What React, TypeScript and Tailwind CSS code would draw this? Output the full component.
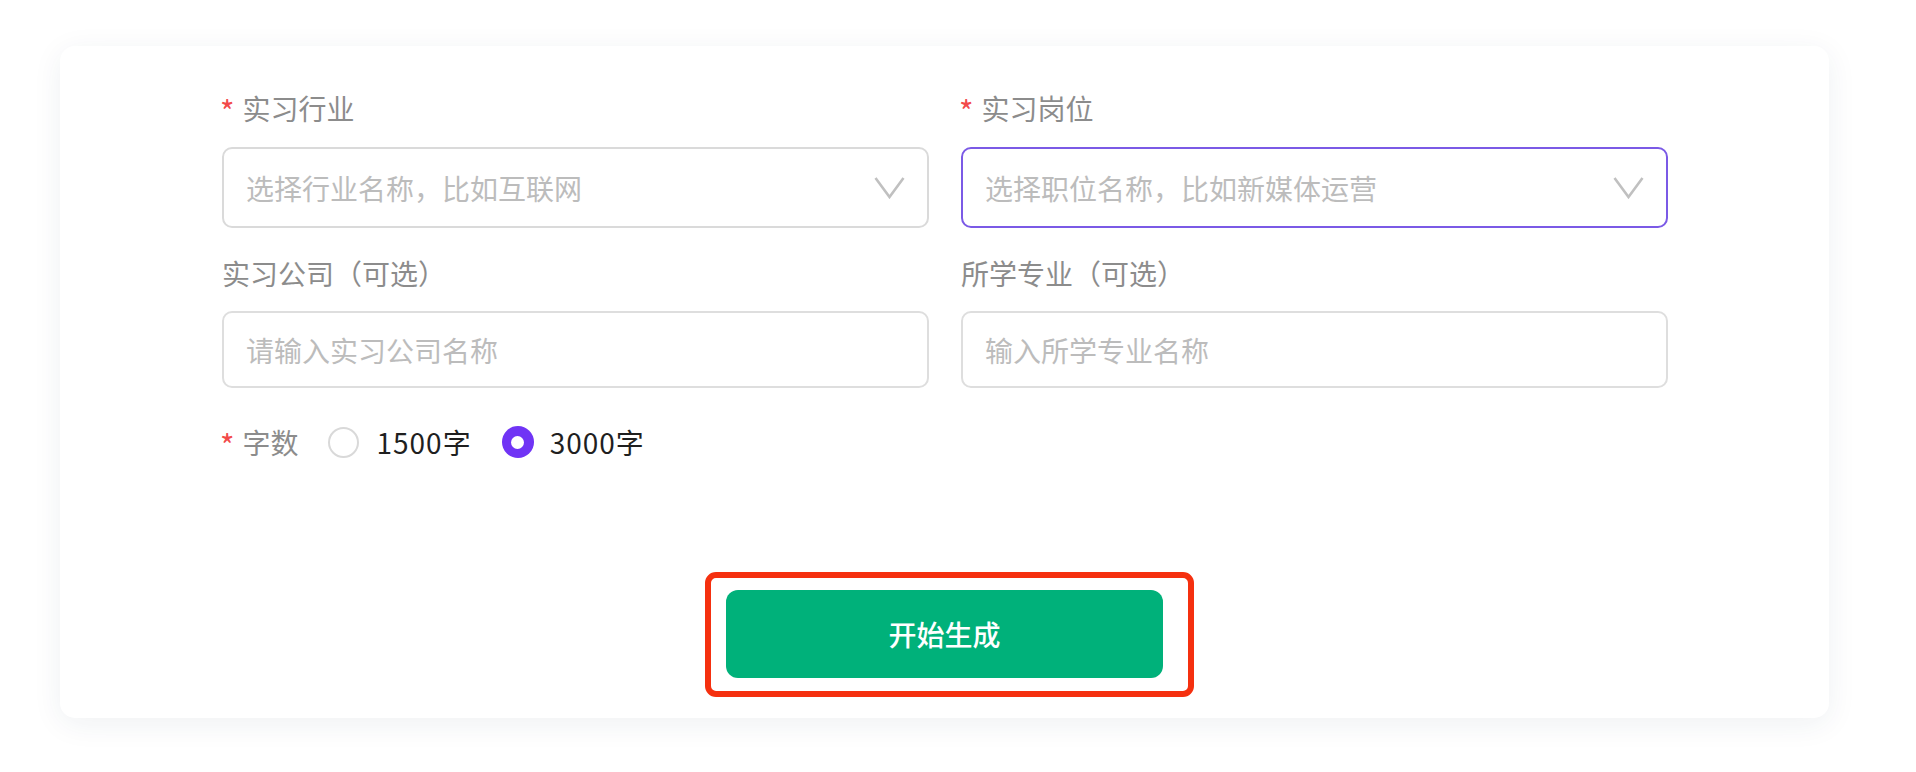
import React from "react";

const font = { fontFamily: '"Noto Sans CJK SC", "Noto Sans", sans-serif' };

function Chevron() {
  return (
    <svg width="31" height="23" viewBox="0 0 31 23" fill="none">
      <polyline points="1.5,2 15.5,21 29.5,2" stroke="#c0c0c0" strokeWidth="2.6" strokeLinejoin="miter" />
    </svg>
  );
}

function Label({ text, required }: { text: string; required?: boolean }) {
  return (
    <div className="flex items-center h-[40px] leading-[40px] text-[28px] text-[#8c8c8c]">
      {required && <span className="text-[#f24a4a] -ml-[2px] mr-[8px] text-[31px] leading-[40px] pt-[6px]">*</span>}
      <span>{text}</span>
    </div>
  );
}

export default function App() {
  return (
    <div className="w-[1916px] h-[772px] bg-white overflow-hidden" style={font}>
      <div className="ml-[60px] mt-[46px] w-[1769px] h-[672px] rounded-[15px] bg-white shadow-[0_6px_30px_rgba(30,50,80,0.07)] pt-[42px] pl-[162px]">
        <div className="w-[1446px] grid grid-cols-2 gap-x-[32px]">
          <div>
            <Label text="实习行业" required />
            <div className="mt-[19px] h-[81px] rounded-[10px] border-2 border-[#dadada] flex items-center justify-between pl-[22px] pr-[22px]">
              <span className="text-[28px] text-[#bcbcbc]">选择行业名称，比如互联网</span>
              <Chevron />
            </div>
          </div>
          <div>
            <Label text="实习岗位" required />
            <div className="mt-[19px] h-[81px] rounded-[10px] border-2 border-[#7b5ae6] flex items-center justify-between pl-[22px] pr-[22px]">
              <span className="text-[28px] text-[#bcbcbc]">选择职位名称，比如新媒体运营</span>
              <Chevron />
            </div>
          </div>
          <div className="mt-[25px]">
            <Label text="实习公司（可选）" />
            <div className="mt-[18px] h-[77px] rounded-[10px] border-2 border-[#dedede] flex items-center pl-[22px]">
              <span className="text-[28px] text-[#bcbcbc]">请输入实习公司名称</span>
            </div>
          </div>
          <div className="mt-[25px]">
            <Label text="所学专业（可选）" />
            <div className="mt-[18px] h-[77px] rounded-[10px] border-2 border-[#dedede] flex items-center pl-[22px]">
              <span className="text-[28px] text-[#bcbcbc]">输入所学专业名称</span>
            </div>
          </div>
        </div>

        <div className="mt-[34px] flex items-center h-[40px]">
          <Label text="字数" required />
          <div className="ml-[29px] w-[31px] h-[31px] rounded-full border-2 border-[#d9d9d9] bg-white" />
          <span className="ml-[18px] text-[28px] text-[#1f1f1f] leading-[40px] tracking-[1px]">1500字</span>
          <div className="ml-[30px] w-[32px] h-[32px] rounded-full bg-[#7034f5] flex items-center justify-center">
            <div className="w-[13px] h-[13px] rounded-full bg-white" />
          </div>
          <span className="ml-[16px] text-[28px] text-[#1f1f1f] leading-[40px] tracking-[1px]">3000字</span>
        </div>

        <div className="mt-[110px] ml-[483px] w-[489px] h-[125px] rounded-[11px] border-[6px] border-[#f5300f] pt-[12px] pl-[15px]">
          <button className="w-[437px] h-[88px] rounded-[12px] bg-[#00b17a] text-white text-[28px] font-medium flex items-center justify-center">
            开始生成
          </button>
        </div>
      </div>
    </div>
  );
}
